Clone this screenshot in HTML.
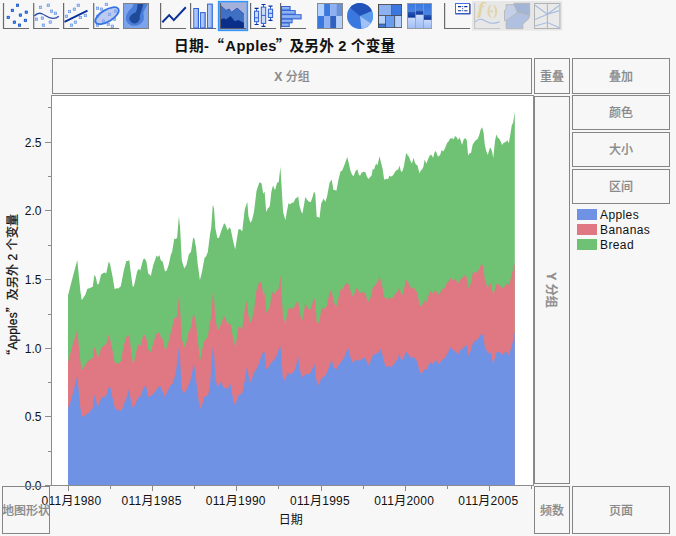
<!DOCTYPE html>
<html lang="zh-CN"><head><meta charset="utf-8"><title>Graph Builder</title>
<style>
html,body{margin:0;padding:0;}
body{width:676px;height:536px;overflow:hidden;background:#f7f7f7;position:relative;font-family:"Liberation Sans","Noto Sans CJK SC",sans-serif;}
svg{position:absolute;left:0;top:0;display:block;}
.title{position:absolute;left:174.1px;width:400px;top:34px;height:22px;line-height:22px;text-align:left;font-weight:bold;font-size:14.67px;letter-spacing:0.3px;word-spacing:-0.4px;color:#111;white-space:nowrap;}
.title .q{font-family:"Noto Sans CJK SC",sans-serif;}
.title .ap{margin-left:1.2px;letter-spacing:0.45px;}
.title .q2{margin-left:-1.3px;margin-right:-1.2px;}
.bx{position:absolute;box-sizing:content-box;border:1px solid #858585;display:flex;align-items:center;justify-content:center;color:#8a8a8a;font-size:12px;white-space:nowrap;font-weight:500;-webkit-text-stroke:0.15px currentColor;}
.bx span{display:block;line-height:14px;}
.bx .v{font-style:normal;display:block;position:relative;left:-1.3px;transform:rotate(90deg);white-space:nowrap;-webkit-text-stroke:0.3px currentColor;}
</style></head><body>
<svg class="tb" width="676" height="34" viewBox="0 0 676 34">
<defs>
<linearGradient id="gbar" x1="0" x2="1" y1="0" y2="0"><stop offset="0" stop-color="#c6d9fc"/><stop offset="1" stop-color="#86acf2"/></linearGradient>
<linearGradient id="ghist" x1="0" x2="0" y1="0" y2="1"><stop offset="0" stop-color="#a8c4f8"/><stop offset="1" stop-color="#6f9df0"/></linearGradient>
<linearGradient id="gtop" x1="0" x2="0" y1="0" y2="1"><stop offset="0" stop-color="#3a78e0"/><stop offset="1" stop-color="#4a84e4"/></linearGradient>
<linearGradient id="gdark" x1="0" x2="0" y1="0" y2="1"><stop offset="0" stop-color="#2a58b8"/><stop offset="1" stop-color="#0a3498"/></linearGradient>
<linearGradient id="glight" x1="0" x2="0" y1="0" y2="1"><stop offset="0" stop-color="#c8dafc"/><stop offset="1" stop-color="#a0bef6"/></linearGradient>
</defs>
<path d="M3.5 3v25.5h25.5" fill="none" stroke="#6a6a6a" stroke-width="1.2"/><rect x="16.0" y="3.8" width="3" height="3" fill="#1a52c0"/><rect x="16.0" y="4.8" width="3" height="1" fill="#2f6ee0"/><rect x="17.0" y="3.8" width="1" height="3" fill="#2f6ee0"/><rect x="17.0" y="4.8" width="1" height="1" fill="#6a9cf0"/><rect x="10.9" y="8.9" width="3" height="3" fill="#1a52c0"/><rect x="10.9" y="9.9" width="3" height="1" fill="#2f6ee0"/><rect x="11.9" y="8.9" width="1" height="3" fill="#2f6ee0"/><rect x="11.9" y="9.9" width="1" height="1" fill="#6a9cf0"/><rect x="24.8" y="10.7" width="3" height="3" fill="#1a52c0"/><rect x="24.8" y="11.7" width="3" height="1" fill="#2f6ee0"/><rect x="25.8" y="10.7" width="1" height="3" fill="#2f6ee0"/><rect x="25.8" y="11.7" width="1" height="1" fill="#6a9cf0"/><rect x="18.9" y="13.6" width="3" height="3" fill="#1a52c0"/><rect x="18.9" y="14.6" width="3" height="1" fill="#2f6ee0"/><rect x="19.9" y="13.6" width="1" height="3" fill="#2f6ee0"/><rect x="19.9" y="14.6" width="1" height="1" fill="#6a9cf0"/><rect x="6.8" y="15.9" width="3" height="3" fill="#1a52c0"/><rect x="6.8" y="16.9" width="3" height="1" fill="#2f6ee0"/><rect x="7.8" y="15.9" width="1" height="3" fill="#2f6ee0"/><rect x="7.8" y="16.9" width="1" height="1" fill="#6a9cf0"/><rect x="23.9" y="18.9" width="3" height="3" fill="#1a52c0"/><rect x="23.9" y="19.9" width="3" height="1" fill="#2f6ee0"/><rect x="24.9" y="18.9" width="1" height="3" fill="#2f6ee0"/><rect x="24.9" y="19.9" width="1" height="1" fill="#6a9cf0"/><rect x="12.9" y="20.7" width="3" height="3" fill="#1a52c0"/><rect x="12.9" y="21.7" width="3" height="1" fill="#2f6ee0"/><rect x="13.9" y="20.7" width="1" height="3" fill="#2f6ee0"/><rect x="13.9" y="21.7" width="1" height="1" fill="#6a9cf0"/><rect x="18.0" y="23.7" width="3" height="3" fill="#1a52c0"/><rect x="18.0" y="24.7" width="3" height="1" fill="#2f6ee0"/><rect x="19.0" y="23.7" width="1" height="3" fill="#2f6ee0"/><rect x="19.0" y="24.7" width="1" height="1" fill="#6a9cf0"/>
<path d="M33.7 3v25.5h25.5" fill="none" stroke="#6a6a6a" stroke-width="1.2"/><rect x="39.0" y="5.8" width="3" height="3" fill="#6f9ae6"/><rect x="39.0" y="6.8" width="3" height="1" fill="#92b6f2"/><rect x="40.0" y="5.8" width="1" height="3" fill="#92b6f2"/><rect x="40.0" y="6.8" width="1" height="1" fill="#c4d8fa"/><rect x="46.8" y="3.8" width="3" height="3" fill="#6f9ae6"/><rect x="46.8" y="4.8" width="3" height="1" fill="#92b6f2"/><rect x="47.8" y="3.8" width="1" height="3" fill="#92b6f2"/><rect x="47.8" y="4.8" width="1" height="1" fill="#c4d8fa"/><rect x="50.0" y="9.7" width="3" height="3" fill="#6f9ae6"/><rect x="50.0" y="10.7" width="3" height="1" fill="#92b6f2"/><rect x="51.0" y="9.7" width="1" height="3" fill="#92b6f2"/><rect x="51.0" y="10.7" width="1" height="1" fill="#c4d8fa"/><rect x="53.9" y="11.8" width="3" height="3" fill="#6f9ae6"/><rect x="53.9" y="12.8" width="3" height="1" fill="#92b6f2"/><rect x="54.9" y="11.8" width="1" height="3" fill="#92b6f2"/><rect x="54.9" y="12.8" width="1" height="1" fill="#c4d8fa"/><rect x="34.9" y="17.7" width="3" height="3" fill="#6f9ae6"/><rect x="34.9" y="18.7" width="3" height="1" fill="#92b6f2"/><rect x="35.9" y="17.7" width="1" height="3" fill="#92b6f2"/><rect x="35.9" y="18.7" width="1" height="1" fill="#c4d8fa"/><rect x="40.9" y="16.6" width="3" height="3" fill="#6f9ae6"/><rect x="40.9" y="17.6" width="3" height="1" fill="#92b6f2"/><rect x="41.9" y="16.6" width="1" height="3" fill="#92b6f2"/><rect x="41.9" y="17.6" width="1" height="1" fill="#c4d8fa"/><rect x="48.8" y="20.6" width="3" height="3" fill="#6f9ae6"/><rect x="48.8" y="21.6" width="3" height="1" fill="#92b6f2"/><rect x="49.8" y="20.6" width="1" height="3" fill="#92b6f2"/><rect x="49.8" y="21.6" width="1" height="1" fill="#c4d8fa"/><rect x="41.9" y="23.7" width="3" height="3" fill="#6f9ae6"/><rect x="41.9" y="24.7" width="3" height="1" fill="#92b6f2"/><rect x="42.9" y="23.7" width="1" height="3" fill="#92b6f2"/><rect x="42.9" y="24.7" width="1" height="1" fill="#c4d8fa"/><path d="M34.3 16 C36.5 13.5 39.5 12.5 42.5 14 C46 15.8 49 18.6 53 18.4 C55.5 18.3 57.5 17.5 58.8 16.2" fill="none" stroke="#2a4fa8" stroke-width="1.3"/>
<path d="M63.6 3v25.5h25.5" fill="none" stroke="#6a6a6a" stroke-width="1.2"/><rect x="76.8" y="3.8" width="3" height="3" fill="#6f9ae6"/><rect x="76.8" y="4.8" width="3" height="1" fill="#92b6f2"/><rect x="77.8" y="3.8" width="1" height="3" fill="#92b6f2"/><rect x="77.8" y="4.8" width="1" height="1" fill="#c4d8fa"/><rect x="72.9" y="7.7" width="3" height="3" fill="#6f9ae6"/><rect x="72.9" y="8.7" width="3" height="1" fill="#92b6f2"/><rect x="73.9" y="7.7" width="1" height="3" fill="#92b6f2"/><rect x="73.9" y="8.7" width="1" height="1" fill="#c4d8fa"/><rect x="68.0" y="10.0" width="3" height="3" fill="#6f9ae6"/><rect x="68.0" y="11.0" width="3" height="1" fill="#92b6f2"/><rect x="69.0" y="10.0" width="1" height="3" fill="#92b6f2"/><rect x="69.0" y="11.0" width="1" height="1" fill="#c4d8fa"/><rect x="65.0" y="14.8" width="3" height="3" fill="#6f9ae6"/><rect x="65.0" y="15.8" width="3" height="1" fill="#92b6f2"/><rect x="66.0" y="14.8" width="1" height="3" fill="#92b6f2"/><rect x="66.0" y="15.8" width="1" height="1" fill="#c4d8fa"/><rect x="83.9" y="13.9" width="3" height="3" fill="#6f9ae6"/><rect x="83.9" y="14.9" width="3" height="1" fill="#92b6f2"/><rect x="84.9" y="13.9" width="1" height="3" fill="#92b6f2"/><rect x="84.9" y="14.9" width="1" height="1" fill="#c4d8fa"/><rect x="78.9" y="16.0" width="3" height="3" fill="#6f9ae6"/><rect x="78.9" y="17.0" width="3" height="1" fill="#92b6f2"/><rect x="79.9" y="16.0" width="1" height="3" fill="#92b6f2"/><rect x="79.9" y="17.0" width="1" height="1" fill="#c4d8fa"/><rect x="73.9" y="20.7" width="3" height="3" fill="#6f9ae6"/><rect x="73.9" y="21.7" width="3" height="1" fill="#92b6f2"/><rect x="74.9" y="20.7" width="1" height="3" fill="#92b6f2"/><rect x="74.9" y="21.7" width="1" height="1" fill="#c4d8fa"/><rect x="70.0" y="23.7" width="3" height="3" fill="#6f9ae6"/><rect x="70.0" y="24.7" width="3" height="1" fill="#92b6f2"/><rect x="71.0" y="23.7" width="1" height="3" fill="#92b6f2"/><rect x="71.0" y="24.7" width="1" height="1" fill="#c4d8fa"/><path d="M64.5 21.9L87.5 10.6" fill="none" stroke="#0a2f9a" stroke-width="1.8"/>
<path d="M93.7 3v25.5h25.5" fill="none" stroke="#6a6a6a" stroke-width="1.2"/><rect x="104.9" y="2.9" width="3" height="3" fill="#6f9ae6"/><rect x="104.9" y="3.9" width="3" height="1" fill="#92b6f2"/><rect x="105.9" y="2.9" width="1" height="3" fill="#92b6f2"/><rect x="105.9" y="3.9" width="1" height="1" fill="#c4d8fa"/><rect x="96.0" y="6.8" width="3" height="3" fill="#6f9ae6"/><rect x="96.0" y="7.8" width="3" height="1" fill="#92b6f2"/><rect x="97.0" y="6.8" width="1" height="3" fill="#92b6f2"/><rect x="97.0" y="7.8" width="1" height="1" fill="#c4d8fa"/><rect x="99.9" y="7.7" width="3" height="3" fill="#6f9ae6"/><rect x="99.9" y="8.7" width="3" height="1" fill="#92b6f2"/><rect x="100.9" y="7.7" width="1" height="3" fill="#92b6f2"/><rect x="100.9" y="8.7" width="1" height="1" fill="#c4d8fa"/><rect x="113.9" y="9.7" width="3" height="3" fill="#6f9ae6"/><rect x="113.9" y="10.7" width="3" height="1" fill="#92b6f2"/><rect x="114.9" y="9.7" width="1" height="3" fill="#92b6f2"/><rect x="114.9" y="10.7" width="1" height="1" fill="#c4d8fa"/><rect x="108.0" y="12.9" width="3" height="3" fill="#6f9ae6"/><rect x="108.0" y="13.9" width="3" height="1" fill="#92b6f2"/><rect x="109.0" y="12.9" width="1" height="3" fill="#92b6f2"/><rect x="109.0" y="13.9" width="1" height="1" fill="#c4d8fa"/><rect x="96.1" y="14.8" width="3" height="3" fill="#6f9ae6"/><rect x="96.1" y="15.8" width="3" height="1" fill="#92b6f2"/><rect x="97.1" y="14.8" width="1" height="3" fill="#92b6f2"/><rect x="97.1" y="15.8" width="1" height="1" fill="#c4d8fa"/><rect x="112.9" y="17.7" width="3" height="3" fill="#6f9ae6"/><rect x="112.9" y="18.7" width="3" height="1" fill="#92b6f2"/><rect x="113.9" y="17.7" width="1" height="3" fill="#92b6f2"/><rect x="113.9" y="18.7" width="1" height="1" fill="#c4d8fa"/><rect x="101.9" y="19.6" width="3" height="3" fill="#6f9ae6"/><rect x="101.9" y="20.6" width="3" height="1" fill="#92b6f2"/><rect x="102.9" y="19.6" width="1" height="3" fill="#92b6f2"/><rect x="102.9" y="20.6" width="1" height="1" fill="#c4d8fa"/><rect x="106.8" y="22.8" width="3" height="3" fill="#6f9ae6"/><rect x="106.8" y="23.8" width="3" height="1" fill="#92b6f2"/><rect x="107.8" y="22.8" width="1" height="3" fill="#92b6f2"/><rect x="107.8" y="23.8" width="1" height="1" fill="#c4d8fa"/><rect x="96.0" y="23.7" width="3" height="3" fill="#6f9ae6"/><rect x="96.0" y="24.7" width="3" height="1" fill="#92b6f2"/><rect x="97.0" y="23.7" width="1" height="3" fill="#92b6f2"/><rect x="97.0" y="24.7" width="1" height="1" fill="#c4d8fa"/><rect x="110.9" y="24.8" width="3" height="3" fill="#6f9ae6"/><rect x="110.9" y="25.8" width="3" height="1" fill="#92b6f2"/><rect x="111.9" y="24.8" width="1" height="3" fill="#92b6f2"/><rect x="111.9" y="25.8" width="1" height="1" fill="#c4d8fa"/><ellipse cx="107" cy="15.7" rx="13.2" ry="5.9" transform="rotate(-31 107 15.7)" fill="rgba(140,165,235,0.55)" stroke="#3474e6" stroke-width="1.8"/>
<rect x="123.5" y="3.5" width="25" height="25" fill="#7ba4ec" stroke="#808080" stroke-width="1"/><polygon points="133.9,3.6 132.8,7.1 129.2,10.7 126.6,15.4 126.2,19.5 128.0,23.1 131.6,25.2 136.3,25.4 140.4,23.7 143.2,20.1 143.4,16.0 142.8,13.0 144.6,8.9 146.7,5.3 147.2,3.6" fill="#4a7dd8" stroke="#4a7dd8" stroke-width="0.8" stroke-linejoin="round"/><polygon points="138.1,3.6 137.5,8.3 136.3,12.4 132.8,14.0 130.1,16.6 129.8,19.5 131.6,22.2 134.5,23.2 137.5,22.2 139.3,19.5 139.3,16.0 140.4,12.4 142.0,7.7 143.0,3.6" fill="#1f4a9a" stroke="#1f4a9a" stroke-width="0.8" stroke-linejoin="round"/><rect x="123.5" y="3.5" width="25" height="25" fill="none" stroke="#808080" stroke-width="1"/>
<path d="M160.6 3v25.5h25.5" fill="none" stroke="#6a6a6a" stroke-width="1.2"/><path d="M162.3 22.2L169.2 15.1L173.8 20.1L185.8 7.3" fill="none" stroke="#0a2f9a" stroke-width="2"/>
<path d="M190.6 3v25.5h25.5" fill="none" stroke="#6a6a6a" stroke-width="1.2"/><rect x="193.8" y="8.5" width="4.7" height="19.5" fill="url(#gbar)" stroke="#2f5fd0" stroke-width="1"/><rect x="200.6" y="12.6" width="4.6" height="15.4" fill="url(#gbar)" stroke="#2f5fd0" stroke-width="1"/><rect x="207.6" y="4.1" width="4.7" height="23.9" fill="url(#gbar)" stroke="#2f5fd0" stroke-width="1"/>
<rect x="218.6" y="1.6" width="28.8" height="28.8" fill="#a3b1da" stroke="#3396fa" stroke-width="1.5"/><path d="M220.5 3v25.5h25.5" fill="none" stroke="#5a5a6a" stroke-width="1.2"/><path d="M221 5.9L226 10.4L229.3 9.1L231.5 12.4L237.1 8.1L243.9 14V28H221Z" fill="#3f70c4"/><path d="M221 5.9L226 10.4L229.3 9.1L231.5 12.4L237.1 8.1L243.9 14" fill="none" stroke="#2a55b0" stroke-width="0.9"/><path d="M221 19.2L224 18.2L226 19.5L230.6 16L234.8 21.2L238.4 19.9L240.6 21.2L243.9 22.8V28H221Z" fill="#0a2f8a"/>
<path d="M250.6 3v25.5h25.5" fill="none" stroke="#6a6a6a" stroke-width="1.2"/><path d="M256.6 8.3V11.2M256.6 21.7V24.5" stroke="#2f5fd0" stroke-width="1" fill="none"/><path d="M254.6 8.3h4M254.6 24.5h4" stroke="#0a2f9a" stroke-width="1.2" fill="none"/><rect x="254.5" y="11.2" width="4.1" height="10.5" fill="#c8dafc" stroke="#2f5fd0" stroke-width="1"/><path d="M254.5 17.8H258.6" stroke="#2f5fd0" stroke-width="1" fill="none"/><path d="M263.5 4.5V7.1M263.5 23.4V26.3" stroke="#2f5fd0" stroke-width="1" fill="none"/><path d="M261.5 4.5h4M261.5 26.3h4" stroke="#0a2f9a" stroke-width="1.2" fill="none"/><rect x="261.3" y="7.1" width="4.4" height="16.3" fill="#c8dafc" stroke="#2f5fd0" stroke-width="1"/><path d="M261.3 15.4H265.7" stroke="#2f5fd0" stroke-width="1" fill="none"/><path d="M270.5 6.2V9.2M270.5 17.5V20.4" stroke="#2f5fd0" stroke-width="1" fill="none"/><path d="M268.5 6.2h4M268.5 20.4h4" stroke="#0a2f9a" stroke-width="1.2" fill="none"/><rect x="268.4" y="9.2" width="4.2" height="8.3" fill="#c8dafc" stroke="#2f5fd0" stroke-width="1"/><path d="M268.4 13.3H272.6" stroke="#2f5fd0" stroke-width="1" fill="none"/>
<path d="M280.6 3v25.5h25.5" fill="none" stroke="#6a6a6a" stroke-width="1.2"/><rect x="281.5" y="6.5" width="8.6" height="3.6" fill="url(#ghist)" stroke="#2f5fd0" stroke-width="1"/><rect x="281.5" y="10.6" width="13.7" height="3.7" fill="url(#ghist)" stroke="#2f5fd0" stroke-width="1"/><rect x="281.5" y="14.7" width="19.6" height="4.2" fill="url(#ghist)" stroke="#2f5fd0" stroke-width="1"/><rect x="281.5" y="19.2" width="10.6" height="3.6" fill="url(#ghist)" stroke="#2f5fd0" stroke-width="1"/><rect x="281.5" y="23.1" width="7.7" height="3.5" fill="url(#ghist)" stroke="#2f5fd0" stroke-width="1"/>
<rect x="318.00" y="4" width="6.2" height="12" fill="#b4d0fc"/><rect x="318.00" y="16" width="6.2" height="12.4" fill="#3a78e0"/><rect x="324.10" y="4" width="6.2" height="12" fill="#3a78e0"/><rect x="324.10" y="16" width="6.2" height="12.4" fill="#8cb0f0"/><rect x="330.20" y="4" width="6.2" height="12" fill="#8cb0f0"/><rect x="330.20" y="16" width="6.2" height="12.4" fill="#3060c0"/><rect x="336.30" y="4" width="6.2" height="12" fill="#6890dc"/><rect x="336.30" y="16" width="6.2" height="12.4" fill="#b4d0fc"/><rect x="317.5" y="3.5" width="25" height="25" fill="none" stroke="#8a8a8a" stroke-width="1"/>
<circle cx="360" cy="16" r="13" fill="#3a78e0"/><path d="M360.0 16.0L350.04 7.64A13 13 0 0 1 371.97 10.92Z" fill="#2252b8"/><path d="M360.0 16.0L371.97 10.92A13 13 0 0 1 370.78 23.27Z" fill="#5a9ae8"/><path d="M360.0 16.0L370.78 23.27A13 13 0 0 1 361.58 28.90Z" fill="#a0c0f8"/>
<rect x="378" y="4" width="24" height="24" fill="#4a4a4a"/><rect x="378.99" y="4.85" width="12.31" height="10.30" fill="#8cb0f0"/><rect x="392.01" y="4.85" width="9.35" height="10.30" fill="#3a78e0"/><rect x="378.99" y="15.98" width="6.15" height="7.69" fill="#b4d0fc"/><rect x="378.99" y="24.50" width="6.15" height="2.72" fill="#3a78e0"/><rect x="385.98" y="15.98" width="8.28" height="11.24" fill="#6a9cf0"/><rect x="395.09" y="15.98" width="6.27" height="11.24" fill="#b4d0fc"/>
<rect x="407" y="3" width="25" height="26" fill="#9a9a9a"/><rect x="407.99" y="3.91" width="7.22" height="7.93" fill="url(#gtop)"/><rect x="407.99" y="11.83" width="7.22" height="5.92" fill="url(#gdark)"/><rect x="407.99" y="17.75" width="7.22" height="10.30" fill="url(#glight)"/><rect x="415.92" y="3.91" width="7.34" height="6.75" fill="url(#gtop)"/><rect x="415.92" y="10.65" width="7.34" height="4.14" fill="url(#gdark)"/><rect x="415.92" y="14.79" width="7.34" height="13.25" fill="url(#glight)"/><rect x="423.96" y="3.91" width="7.34" height="10.89" fill="url(#gtop)"/><rect x="423.96" y="14.79" width="7.34" height="5.09" fill="url(#gdark)"/><rect x="423.96" y="19.88" width="7.34" height="8.17" fill="url(#glight)"/>
<path d="M444.6 3v25.5h25.5" fill="none" stroke="#6a6a6a" stroke-width="1.2"/><rect x="455.5" y="3.5" width="14" height="10" fill="#fff" stroke="#3f6fe6" stroke-width="1"/><path d="M455.5 14h14.8M470.2 4v10" stroke="#2a4ab0" stroke-width="0.9" fill="none"/><path d="M458 6.6h3.2M464.2 6.6h3.2M458 10.7h3.2M464.2 10.7h3.2" stroke="#1030a0" stroke-width="1.1" fill="none"/><rect x="462.2" y="6.1" width="1" height="1" fill="#1030a0"/><rect x="462.2" y="8.2" width="1" height="1" fill="#1030a0"/><rect x="462.2" y="10.2" width="1" height="1" fill="#1030a0"/>
<rect x="472" y="1" width="90.2" height="29.6" fill="#e7e7e7"/><path d="M474.6 3v25.5h25.4" fill="none" stroke="#c6c6c6" stroke-width="1.2"/><text transform="translate(477.2,14.4) scale(1.3,1)" font-family="'Liberation Serif',serif" font-style="italic" font-weight="bold" font-size="17" fill="#e2d4a6">f</text><text x="487" y="15.2" font-family="'Liberation Serif',serif" font-weight="bold" font-size="14.5" fill="#e2d4a6">(</text><text x="492.9" y="15.2" font-family="'Liberation Serif',serif" font-weight="bold" font-size="14.5" fill="#e2d4a6">)</text><circle cx="491.5" cy="11.3" r="1.3" fill="#e2d4a6"/><path d="M475.2 21.9 C477.5 19.5 480.5 18.6 483.5 20 C486.5 21.5 489 23.3 492 23.3 C495 23.3 498 22.5 499.6 21.8" fill="none" stroke="#a6b8de" stroke-width="1.1"/><path d="M506.2 4.7H513.9L517.5 12.4L506.2 20.7H504.5V10.4L506.2 8.9Z" fill="#c4d0e8"/><path d="M513.9 3.3H529.7V15.4L517.5 12.4L513.9 4.7Z" fill="#a4b4d4"/><path d="M517.5 12.4L529.7 15.4L528.5 18.9L522.8 24.3V28.6H506.2V20.7Z" fill="#b0c0e0"/><path d="M506.2 4.7H513.9V3.3H529.7V15.4L528.5 18.9L522.8 24.3V28.6H506.2V20.7H504.5V10.4L506.2 8.9ZM513.9 4.7L517.5 12.4L529.7 15.4M517.5 12.4L506.2 20.7" fill="none" stroke="#b4b4b4" stroke-width="0.9"/><rect x="534.5" y="3.5" width="25.4" height="25" fill="#e9e9e9" stroke="#b2b2b2" stroke-width="1"/><path d="M535 5.3L547.4 14.2L559.5 5.3M535 19.5L547.4 14.2L559.5 10.6M535 26L547.4 22.5L559.5 27.8" fill="none" stroke="#a8bce0" stroke-width="1.1"/><path d="M547.4 3.5V28.5" stroke="#b2b2b2" stroke-width="1"/>
</svg>
<svg class="ch" width="676" height="536" viewBox="0 0 676 536">
<rect x="51.5" y="95.5" width="482" height="390" fill="#fff" stroke="#8c8c8c" stroke-width="1"/>
<polygon fill="#6fc173" points="68.0,485.5 68.0,295.6 70.1,287.2 73.4,274.6 77.3,260.0 78.8,275.4 80.5,292.2 81.8,300.3 83.5,297.6 85.2,295.1 87.4,288.8 89.4,288.3 92.7,286.8 94.4,275.1 95.8,277.1 97.3,284.6 99.0,283.5 101.1,274.6 103.3,273.1 105.0,272.4 106.2,273.4 108.7,261.6 110.0,264.0 112.5,276.2 114.7,289.3 116.8,288.0 117.9,288.8 120.8,286.3 123.8,270.4 126.3,261.1 128.0,261.1 129.3,260.0 130.5,270.4 132.7,286.8 133.9,286.3 137.2,271.2 138.9,268.7 140.3,270.4 143.1,259.5 144.8,258.6 146.5,262.0 148.2,273.7 149.3,274.1 150.7,276.2 153.2,265.3 156.6,255.6 157.7,256.9 159.4,255.3 160.7,260.0 162.8,262.0 164.9,270.9 165.0,271.4 166.7,270.6 168.7,264.7 170.9,254.6 172.1,252.1 174.2,238.7 175.9,239.0 177.1,237.8 178.9,216.0 180.1,227.8 181.8,260.5 184.3,268.6 186.5,264.7 188.8,254.6 191.0,251.8 193.2,237.5 194.4,238.7 196.1,247.9 197.7,263.9 199.9,280.0 201.9,272.3 204.5,258.0 206.1,256.3 207.8,252.1 210.0,234.5 211.2,227.8 212.8,204.8 214.0,208.5 215.4,228.6 217.4,238.2 219.1,237.5 221.2,231.1 224.1,223.2 225.4,224.4 227.5,230.3 229.6,227.3 230.8,229.5 233.0,240.4 235.2,249.6 236.9,238.7 238.4,229.5 240.1,228.9 242.2,231.6 244.8,209.3 247.3,201.8 248.4,216.0 250.3,222.7 252.0,220.2 254.0,211.8 256.5,191.1 259.4,182.2 261.6,183.6 263.2,193.7 264.6,191.6 266.2,212.1 267.8,208.4 269.4,207.1 270.0,204.6 271.3,192.0 273.0,185.6 275.0,190.3 277.1,182.7 278.7,181.9 280.4,166.8 281.4,183.6 283.1,212.1 285.4,220.2 286.8,212.1 288.5,202.9 289.8,204.6 291.5,202.9 293.5,202.4 295.5,198.4 296.9,197.8 298.2,196.2 299.4,205.4 301.1,211.3 302.4,213.8 303.9,205.4 305.3,197.0 306.9,199.5 308.9,201.7 310.8,202.1 312.8,196.2 314.0,191.6 315.3,194.0 316.7,216.8 318.4,217.2 319.5,218.0 321.2,203.4 322.4,201.2 323.4,198.4 325.4,201.7 327.1,196.2 329.6,182.7 331.6,179.4 333.5,190.0 335.1,190.0 336.3,191.1 338.5,179.4 340.5,171.5 342.2,170.5 344.7,164.3 347.2,157.1 348.9,163.4 350.3,170.2 351.9,174.3 353.4,176.5 355.6,171.0 357.3,169.3 359.0,175.2 360.3,175.5 361.5,172.7 363.7,171.8 365.4,172.3 367.1,176.9 368.4,178.9 370.1,176.9 371.6,175.5 372.8,168.8 374.1,169.8 375.0,166.2 376.3,163.4 377.5,165.4 379.5,156.2 380.9,162.1 382.6,168.8 384.2,179.7 386.4,178.8 388.1,179.3 389.4,175.5 390.9,176.8 393.1,175.2 395.1,171.8 396.8,170.1 398.2,169.6 399.5,165.4 401.0,171.8 402.4,171.3 403.9,166.2 406.2,152.8 407.7,155.3 409.1,157.0 410.6,161.2 411.9,163.4 413.6,157.8 415.0,162.9 416.1,164.6 417.5,165.4 419.5,173.5 420.7,170.4 422.0,169.6 423.4,166.8 424.7,159.5 426.4,163.7 427.9,159.5 429.6,155.7 431.2,154.5 433.1,157.8 434.6,152.3 435.8,151.1 438.0,156.7 440.1,155.0 441.7,150.0 443.3,151.6 445.2,147.8 447.2,142.7 448.9,141.1 450.0,138.6 452.5,138.3 453.7,139.5 455.0,136.1 456.7,137.3 458.1,140.3 459.2,137.3 460.4,139.5 462.1,145.0 463.8,138.9 465.4,138.3 466.8,140.3 468.1,155.4 469.8,152.9 471.0,152.9 472.7,144.5 474.4,142.0 476.0,140.0 477.7,138.9 479.4,134.4 480.7,129.4 482.2,127.2 483.6,132.7 484.8,144.5 486.1,150.4 487.8,155.1 489.5,148.7 490.6,147.8 492.0,151.2 493.3,157.9 495.0,141.1 496.3,134.4 497.9,137.8 499.5,138.9 500.9,142.0 502.1,145.0 503.7,142.8 505.7,142.0 507.4,140.3 508.8,143.3 510.1,136.1 511.8,125.2 513.1,122.7 514.8,112.1 514.8,485.5"/>
<polygon fill="#e07883" points="68.0,485.5 68.0,362.2 70.1,354.6 73.4,342.1 77.3,330.0 78.8,345.4 80.5,362.2 81.8,370.3 83.5,368.1 85.2,365.6 87.4,361.4 89.4,360.2 92.7,358.0 94.4,347.1 95.8,349.6 97.3,357.2 99.0,355.8 101.1,347.9 103.3,346.2 105.0,345.1 106.2,344.6 108.7,334.5 110.0,338.7 112.5,350.4 114.7,362.5 116.8,363.0 117.9,363.9 120.8,361.4 123.8,345.4 126.3,337.0 128.0,336.2 129.3,334.5 130.5,345.4 132.7,363.0 133.9,362.2 137.2,347.1 138.9,344.1 140.3,346.2 143.1,335.7 144.8,335.0 146.5,338.7 148.2,350.1 149.3,350.1 150.7,352.5 153.2,342.9 156.6,333.3 157.7,334.0 159.4,331.6 160.7,337.0 162.8,339.5 164.9,349.1 165.0,349.8 166.7,348.1 168.7,341.4 170.9,332.2 172.1,328.0 174.2,317.9 175.9,318.7 177.1,315.4 178.9,296.1 180.1,308.7 181.8,338.9 184.3,347.3 186.5,342.2 188.8,331.3 191.0,328.0 193.2,313.7 194.4,315.4 196.1,324.6 197.7,340.6 200.3,360.4 202.3,348.9 204.5,340.6 206.1,338.9 207.8,337.2 210.0,322.1 211.2,317.1 212.8,292.7 214.0,298.6 215.4,318.7 217.4,329.6 219.1,329.6 221.2,322.9 224.1,316.2 225.4,317.9 227.5,324.6 229.6,322.9 230.8,325.4 233.0,337.2 235.2,347.3 236.9,337.2 238.4,327.1 240.1,327.1 242.2,329.6 244.8,307.8 247.3,300.3 248.4,315.4 250.3,322.9 252.0,318.7 254.0,310.3 256.5,290.2 259.4,281.8 261.6,282.6 263.2,295.2 264.6,292.7 266.2,312.9 267.8,310.3 269.4,307.8 270.0,306.3 271.3,296.2 273.0,290.7 275.0,295.0 277.1,289.5 278.7,288.7 280.4,275.2 281.4,292.0 283.1,317.2 285.4,323.6 286.8,316.4 288.5,308.5 289.8,308.8 291.5,308.0 293.5,308.5 295.5,304.6 296.9,302.1 298.2,301.2 299.4,310.5 301.1,318.0 302.4,320.2 303.9,312.2 305.3,302.9 306.9,306.3 308.9,309.6 310.8,309.1 312.8,302.1 314.0,297.9 315.3,301.2 316.7,322.2 318.4,323.1 319.5,321.4 321.2,309.6 322.4,308.8 323.4,306.8 325.4,309.6 327.1,304.6 329.6,292.0 331.6,290.3 333.5,301.2 335.1,305.1 336.3,306.8 338.5,297.9 340.5,289.5 342.2,289.5 344.7,285.3 347.2,282.8 348.9,285.0 350.3,290.3 351.9,295.0 353.4,296.7 355.6,289.5 357.3,287.3 359.0,292.0 360.3,292.9 361.5,292.4 363.7,292.0 365.4,293.7 367.1,299.6 368.4,301.8 370.1,298.7 371.6,293.7 372.8,287.3 374.1,287.0 375.0,285.4 376.3,282.9 377.5,283.8 379.5,275.4 380.9,281.2 382.6,288.0 384.2,297.2 386.4,298.0 388.1,299.7 389.4,296.4 390.9,298.5 393.1,297.5 395.1,293.8 396.8,292.2 398.2,290.5 399.5,286.3 401.0,294.7 402.4,294.7 403.9,289.6 406.2,279.6 407.7,282.1 409.1,283.8 410.6,287.5 411.9,289.1 413.6,286.8 415.0,289.6 416.1,291.3 417.5,293.0 419.5,305.6 420.7,305.9 422.0,305.6 423.4,302.2 424.7,299.7 426.4,302.6 427.9,297.2 429.6,292.2 431.2,290.8 433.1,294.7 434.6,290.8 435.8,290.1 438.0,294.7 440.1,293.5 441.7,288.8 443.3,289.6 445.2,287.1 447.2,282.1 448.9,281.2 450.0,278.0 452.5,279.6 453.7,280.5 455.0,278.8 456.7,281.3 458.1,283.8 459.2,281.3 460.4,279.6 462.1,278.0 463.8,276.3 465.4,275.1 466.8,277.5 468.1,288.9 469.8,283.8 471.0,283.5 472.7,272.9 474.4,272.1 476.0,272.9 477.7,271.2 479.4,268.7 480.7,265.4 482.2,264.0 483.6,269.6 484.8,279.6 486.1,283.5 487.8,288.5 489.5,283.8 490.6,283.0 492.0,288.9 493.3,295.3 495.0,288.9 496.3,283.8 497.9,284.2 499.5,284.7 500.9,286.9 502.1,288.5 503.7,286.9 505.7,285.5 507.4,282.5 508.8,285.5 510.1,281.3 511.8,273.8 513.1,269.6 514.8,262.9 514.8,485.5"/>
<polygon fill="#7092e5" points="68.0,485.5 68.0,408.0 70.1,402.9 73.4,391.2 77.3,375.6 78.8,392.0 80.5,408.8 81.8,416.9 83.5,415.9 85.2,415.5 87.4,413.5 89.4,412.2 92.7,408.0 94.4,395.0 95.8,398.7 97.3,407.1 99.0,404.6 101.1,398.4 103.3,396.2 105.0,397.1 106.2,395.4 109.5,385.0 110.9,389.5 112.5,397.9 115.4,410.1 117.4,409.3 118.8,410.1 121.3,411.3 123.8,404.6 127.2,395.4 129.3,388.3 130.5,398.7 132.2,407.1 133.9,406.8 137.2,399.6 138.9,396.7 140.3,396.7 143.1,389.0 145.6,384.5 146.8,389.5 148.2,396.7 149.8,396.2 151.5,395.7 153.2,393.7 156.6,389.5 159.9,385.6 161.6,388.7 164.4,396.2 165.0,396.3 166.7,393.0 168.7,388.8 170.9,385.1 172.6,383.7 174.2,378.7 175.9,372.0 177.6,358.5 178.9,346.8 180.1,358.5 181.4,387.1 183.5,393.8 185.5,391.8 187.7,387.1 190.2,381.2 191.9,373.7 193.9,363.6 195.2,370.3 196.9,387.1 198.6,400.5 200.6,408.9 202.3,403.9 204.5,396.8 206.6,396.0 208.3,394.6 210.0,385.4 211.7,360.2 212.8,346.8 214.0,353.5 215.4,377.0 217.1,387.1 219.1,384.6 221.2,381.2 222.9,386.2 224.6,387.9 226.8,388.4 228.3,388.8 229.6,382.4 230.8,385.4 233.0,398.8 234.7,404.7 236.4,401.4 238.4,395.5 240.1,394.6 242.2,393.0 244.8,380.4 247.3,364.4 248.4,375.3 250.3,382.4 252.0,378.7 254.0,372.8 256.5,368.9 259.0,363.6 261.6,355.2 263.2,352.2 264.6,351.5 266.2,369.5 267.8,367.8 269.4,366.1 270.0,364.6 272.0,362.1 274.2,359.5 275.9,357.0 277.6,352.8 279.2,347.8 280.4,346.1 281.4,357.0 282.8,377.2 284.4,380.5 285.9,378.0 287.3,373.8 288.8,373.5 290.1,374.6 292.2,373.0 294.4,370.4 296.0,366.2 297.2,360.4 298.2,356.2 299.4,367.1 301.1,374.6 302.7,377.5 304.4,375.5 306.1,374.1 308.3,374.1 310.3,373.0 312.0,369.6 313.3,366.2 314.5,363.7 315.7,376.3 317.0,381.9 319.0,385.2 320.7,379.7 322.4,377.2 324.1,376.8 325.4,375.8 327.1,372.1 329.1,367.1 330.8,362.1 331.8,359.5 333.5,367.1 335.5,368.8 336.5,369.6 338.0,365.4 339.7,364.1 341.9,360.4 343.9,357.9 345.9,352.8 348.2,347.8 349.8,354.5 351.4,360.4 353.1,362.9 354.8,360.4 356.5,360.0 357.6,361.2 359.8,359.5 361.5,359.5 363.2,358.7 364.9,357.0 366.6,361.2 368.4,365.4 370.1,362.1 371.8,357.9 373.3,354.0 375.0,354.6 376.7,352.9 378.0,353.7 380.0,348.4 381.7,351.2 383.1,357.9 384.7,363.8 386.8,367.5 388.4,366.3 389.8,365.8 390.9,367.5 393.1,365.1 395.1,362.5 397.2,359.6 398.5,356.2 399.5,352.4 400.7,358.8 402.2,360.4 403.9,357.1 406.2,351.7 407.7,353.4 409.4,355.4 411.1,358.4 412.8,356.8 414.5,357.9 416.1,359.6 417.8,363.8 419.5,371.4 421.7,373.9 423.4,370.5 424.7,369.2 426.4,369.7 427.9,366.3 429.6,363.0 431.2,362.5 433.1,364.6 434.6,361.3 436.3,360.4 438.3,364.1 440.1,362.5 441.7,360.1 443.3,359.1 445.2,357.9 447.2,353.7 448.9,350.4 450.0,347.1 452.5,349.6 454.2,350.8 455.9,351.8 457.1,353.0 458.4,354.6 459.7,351.3 461.4,349.1 463.4,347.9 465.1,346.2 466.8,345.1 468.1,355.5 469.8,353.0 471.0,349.6 472.7,343.7 474.4,341.2 476.0,340.4 477.7,339.5 479.4,337.0 480.7,335.0 482.2,333.7 483.6,337.9 484.8,347.1 486.1,349.6 487.8,353.0 489.5,353.5 490.6,352.1 492.0,358.8 493.3,364.7 495.0,357.2 496.3,352.5 497.9,352.1 499.5,351.8 500.9,353.5 502.1,355.1 503.7,353.0 505.7,352.5 507.4,351.8 508.8,355.8 510.1,351.3 511.8,345.4 513.1,340.4 514.8,331.1 514.8,485.5"/>
<path d="M51.5 485.5H533.5" stroke="#8c8c8c" stroke-width="1"/>
<path d="M45 485.5H51M48 451.5H51M45 416.5H51M48 382.5H51M45 348.5H51M48 314.5H51M45 279.5H51M48 245.5H51M45 210.5H51M48 176.5H51M45 142.5H51M48 107.5H51M68.5 486V491M110.5 486V489M152.5 486V491M194.5 486V489M236.5 486V491M278.5 486V489M321.5 486V491M363.5 486V489M405.5 486V491M447.5 486V489M489.5 486V491M531.5 486V489" stroke="#8c8c8c" stroke-width="1" fill="none"/>
<g font-family="'Liberation Sans','Noto Sans CJK SC',sans-serif" font-size="12" fill="#111">
<text x="41.5" y="489.8" text-anchor="end">0.0</text><text x="41.5" y="420.8" text-anchor="end">0.5</text><text x="41.5" y="352.8" text-anchor="end">1.0</text><text x="41.5" y="283.8" text-anchor="end">1.5</text><text x="41.5" y="214.8" text-anchor="end">2.0</text><text x="41.5" y="146.8" text-anchor="end">2.5</text>
<text x="71.5" y="505" text-anchor="middle" letter-spacing="0.28">011月1980</text><text x="151.6" y="505" text-anchor="middle" letter-spacing="0.28">011月1985</text><text x="235.8" y="505" text-anchor="middle" letter-spacing="0.28">011月1990</text><text x="320.0" y="505" text-anchor="middle" letter-spacing="0.28">011月1995</text><text x="404.2" y="505" text-anchor="middle" letter-spacing="0.28">011月2000</text><text x="488.4" y="505" text-anchor="middle" letter-spacing="0.28">011月2005</text>
<text x="290.8" y="524" text-anchor="middle">日期</text>
<text transform="translate(17.1,287.8) rotate(-90)" text-anchor="middle" letter-spacing="0.1" stroke="#111" stroke-width="0.25"><tspan font-family="'Noto Sans CJK SC',sans-serif">“</tspan>Apples<tspan font-family="'Noto Sans CJK SC',sans-serif">”</tspan>及另外 2 个变量</text>
</g>
<rect x="577" y="209" width="20" height="11" fill="#7092e5"/><text x="600" y="218.8" font-family="'Liberation Sans',sans-serif" font-size="12" letter-spacing="0.4" fill="#111">Apples</text>
<rect x="577" y="224" width="20" height="11" fill="#e07883"/><text x="600" y="233.8" font-family="'Liberation Sans',sans-serif" font-size="12" letter-spacing="0.4" fill="#111">Bananas</text>
<rect x="577" y="239" width="20" height="11" fill="#6fc173"/><text x="600" y="248.8" font-family="'Liberation Sans',sans-serif" font-size="12" letter-spacing="0.4" fill="#111">Bread</text>
</svg>
<div class="title">日期-<span class="q">“</span><span class="ap">Apples</span><span class="q q2">”</span>及另外 2 个变量</div>
<div class="bx" style="left:52px;top:58px;width:478px;height:34px;padding-top:2px;height:32px;"><span><b>X</b> 分组</span></div>
<div class="bx" style="left:534px;top:58px;width:34px;height:34px;padding-top:2px;height:32px;"><span>重叠</span></div>
<div class="bx" style="left:572px;top:58px;width:96px;height:34px;padding-top:2px;height:32px;"><span>叠加</span></div>
<div class="bx" style="left:572px;top:95px;width:96px;height:33px;"><span>颜色</span></div>
<div class="bx" style="left:572px;top:132px;width:96px;height:33px;"><span>大小</span></div>
<div class="bx" style="left:572px;top:169px;width:96px;height:33px;"><span>区间</span></div>
<div class="bx" style="left:534px;top:96px;width:34px;height:386px;"><span><i class="v"><b>Y</b> 分组</i></span></div>
<div class="bx" style="left:2px;top:486px;width:46px;height:46px;overflow:visible;padding-top:2px;height:44px;"><span>地图形状</span></div>
<div class="bx" style="left:534px;top:486px;width:34px;height:46px;padding-top:2px;height:44px;"><span>频数</span></div>
<div class="bx" style="left:572px;top:486px;width:96px;height:46px;padding-top:2px;height:44px;"><span>页面</span></div>
</body></html>
